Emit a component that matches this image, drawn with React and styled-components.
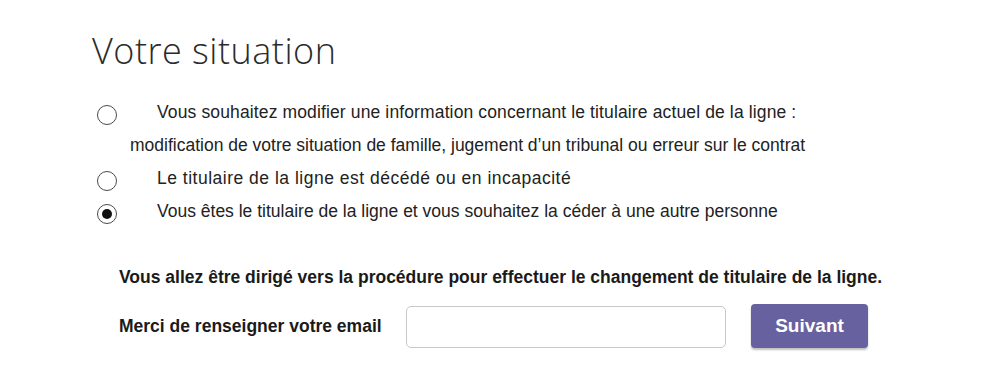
import React, { useState } from 'react';
import styled, { createGlobalStyle } from 'styled-components';

const GlobalStyle = createGlobalStyle`
  body {
    margin: 0;
    background: #ffffff;
    font-family: "Liberation Sans", Arial, sans-serif;
    color: #222222;
  }
`;

const Page = styled.div`
  width: 999px;
  height: 378px;
  padding: 27px 0 0 92px;
  box-sizing: border-box;
  overflow: hidden;
`;

const Title = styled.h1`
  margin: 0 0 21px 0;
  font-family: "Open Sans", sans-serif;
  font-weight: 300;
  font-size: 36px;
  line-height: 48px;
  color: #2b2b2b;
  letter-spacing: 0.5px;
`;

const Options = styled.div`
  display: flex;
  flex-direction: column;
  padding-left: 5px;
`;

const OptionRow = styled.label`
  display: flex;
  align-items: flex-start;
  gap: 40px;
  font-size: 17.5px;
  line-height: 33px;
  color: #222222;
  cursor: pointer;
`;

const Radio = styled.span`
  flex: none;
  width: 20px;
  height: 20px;
  margin-top: 9px;
  border-radius: 50%;
  border: 1px solid #4a4a4a;
  box-sizing: border-box;
  display: flex;
  align-items: center;
  justify-content: center;
  background: #fff;

  &::after {
    content: '';
    width: 10px;
    height: 10px;
    border-radius: 50%;
    background: #111;
    display: ${(p) => (p.$checked ? 'block' : 'none')};
  }
`;

const OptionText = styled.div`
  display: flex;
  flex-direction: column;
`;

const Line = styled.span`
  letter-spacing: ${(p) => p.$spread || 0}px;
`;

const Wrapped = styled(Line)`
  margin-left: -27px;
`;

const Form = styled.div`
  padding: 39px 0 0 27px;
`;

const Notice = styled.p`
  margin: 0 0 17px 0;
  font-size: 17.5px;
  font-weight: bold;
  line-height: 20px;
  color: #1a1a1a;
`;

const FieldRow = styled.div`
  display: flex;
  align-items: center;
  height: 44px;
`;

const FieldLabel = styled.span`
  font-size: 17.5px;
  font-weight: bold;
  color: #1a1a1a;
  width: 287px;
  flex: none;
`;

const EmailInput = styled.input`
  width: 320px;
  height: 42px;
  box-sizing: border-box;
  border: 1px solid #c8c8c8;
  border-radius: 5px;
  padding: 0 10px;
  font-size: 16px;
  font-family: inherit;
  outline: none;
  margin-top: 2px;
`;

const Button = styled.button`
  margin-left: 25px;
  width: 117px;
  height: 44px;
  border: none;
  border-radius: 4px;
  background: #68619f;
  color: #ffffff;
  font-family: "Liberation Sans", Arial, sans-serif;
  font-weight: bold;
  font-size: 19px;
  box-shadow: 0 2px 2px rgba(0, 0, 0, 0.25);
  cursor: pointer;
`;

const options = [
  {
    id: 'modif',
    spread: 0.13,
    text: 'Vous souhaitez modifier une information concernant le titulaire actuel de la ligne :',
    more: 'modification de votre situation de famille, jugement d\u2019un tribunal ou erreur sur le contrat',
  },
  { id: 'deces', spread: 0.5, text: 'Le titulaire de la ligne est décédé ou en incapacité' },
  { id: 'cession', text: 'Vous êtes le titulaire de la ligne et vous souhaitez la céder à une autre personne' },
];

export default function App() {
  const [selected, setSelected] = useState('cession');

  return (
    <>
      <GlobalStyle />
      <Page>
        <Title>Votre situation</Title>
        <Options>
          {options.map((o) => (
            <OptionRow key={o.id} onClick={() => setSelected(o.id)}>
              <Radio $checked={selected === o.id} />
              <OptionText>
                <Line $spread={o.spread}>{o.text}</Line>
                {o.more && <Wrapped>{o.more}</Wrapped>}
              </OptionText>
            </OptionRow>
          ))}
        </Options>
        <Form>
          <Notice>Vous allez être dirigé vers la procédure pour effectuer le changement de titulaire de la ligne.</Notice>
          <FieldRow>
            <FieldLabel>Merci de renseigner votre email</FieldLabel>
            <EmailInput type="email" />
            <Button>Suivant</Button>
          </FieldRow>
        </Form>
      </Page>
    </>
  );
}
